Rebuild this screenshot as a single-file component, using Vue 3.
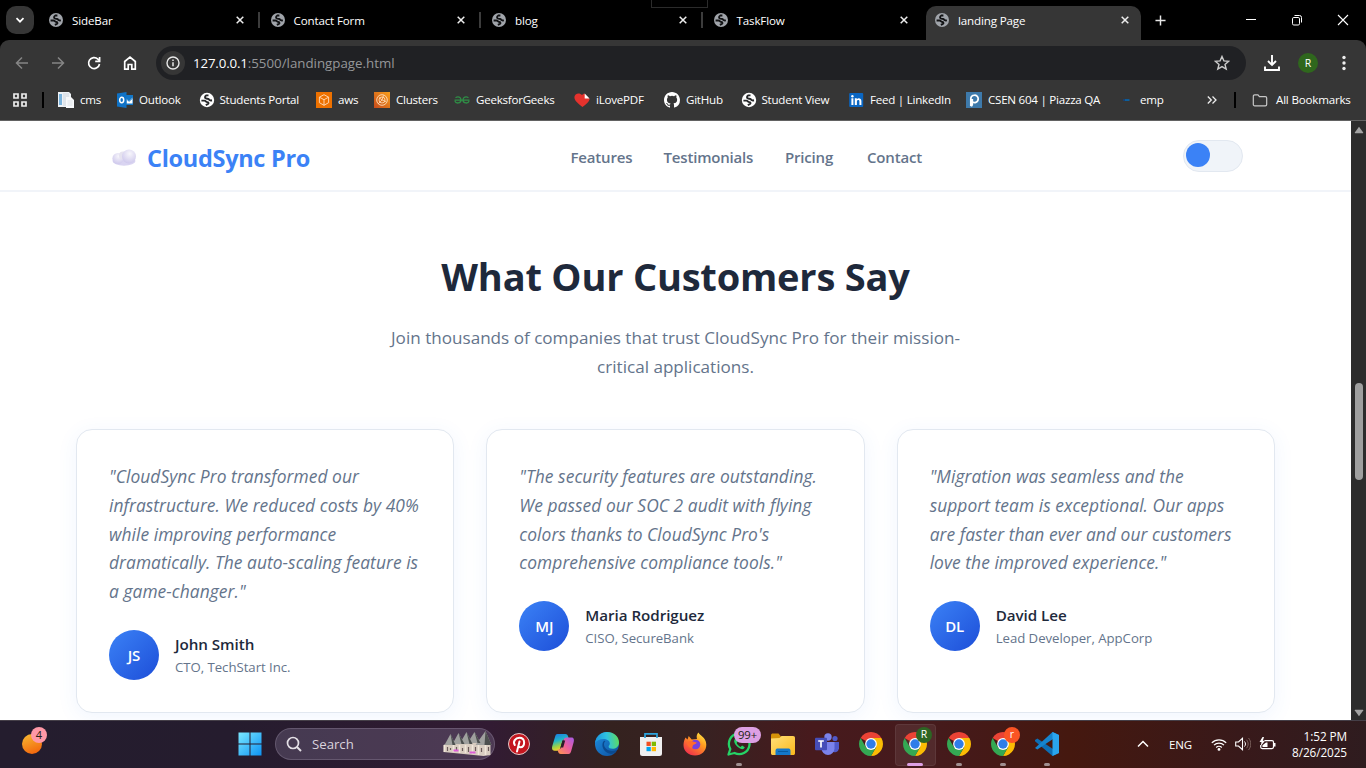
<script setup>
const tabs = [
  { title: 'SideBar' },
  { title: 'Contact Form' },
  { title: 'blog' },
  { title: 'TaskFlow', last: true },
  { title: 'landing Page', active: true },
]
const bookmarks = [
  { icon: 'cms', text: 'cms' },
  { icon: 'outlook', text: 'Outlook' },
  { icon: 'globe-white', text: 'Students Portal' },
  { icon: 'aws', text: 'aws' },
  { icon: 'clusters', text: 'Clusters' },
  { icon: 'gfg', text: 'GeeksforGeeks' },
  { icon: 'pdf', text: 'iLovePDF' },
  { icon: 'github', text: 'GitHub' },
  { icon: 'globe-white', text: 'Student View' },
  { icon: 'linkedin', text: 'Feed | LinkedIn' },
  { icon: 'piazza', text: 'CSEN 604 | Piazza QA' },
  { icon: 'emp', text: 'emp' },
]
const cards = [
  {
    lines: ['"CloudSync Pro transformed our', 'infrastructure. We reduced costs by 40%', 'while improving performance', 'dramatically. The auto-scaling feature is', 'a game-changer."'],
    initials: 'JS', name: 'John Smith', role: 'CTO, TechStart Inc.',
  },
  {
    lines: ['"The security features are outstanding.', 'We passed our SOC 2 audit with flying', "colors thanks to CloudSync Pro's", 'comprehensive compliance tools."'],
    initials: 'MJ', name: 'Maria Rodriguez', role: 'CISO, SecureBank',
  },
  {
    lines: ['"Migration was seamless and the', 'support team is exceptional. Our apps', 'are faster than ever and our customers', 'love the improved experience."'],
    initials: 'DL', name: 'David Lee', role: 'Lead Developer, AppCorp',
  },
]
const apps = [
  { icon: 'pinterest' },
  { icon: 'copilot' },
  { icon: 'edge' },
  { icon: 'store' },
  { icon: 'firefox' },
  { icon: 'whatsapp', badge: '99+', kind: 'count', running: true },
  { icon: 'explorer' },
  { icon: 'teams' },
  { icon: 'chrome' },
  { icon: 'chrome', badge: 'R', kind: 'green', active: true },
  { icon: 'chrome', running: true },
  { icon: 'chrome', badge: 'r', kind: 'orange', running: true },
  { icon: 'vscode', running: true },
]
</script>

<template>
  <div class="screen">
    <svg class="sprite" aria-hidden="true">
      <defs>
        <linearGradient id="g-cop1" x1="0" y1="0" x2="0.3" y2="1"><stop offset="0" stop-color="#1a76e6" /><stop offset=".45" stop-color="#22b5c8" /><stop offset=".75" stop-color="#9bd04a" /><stop offset="1" stop-color="#f4d12c" /></linearGradient>
        <linearGradient id="g-cop2" x1="1" y1="0" x2="0" y2="1"><stop offset="0" stop-color="#a45ae8" /><stop offset=".5" stop-color="#ee5f9c" /><stop offset="1" stop-color="#ff9b4a" /></linearGradient>
        <linearGradient id="g-edge" x1="0" y1="0.4" x2="1" y2="0.3"><stop offset="0" stop-color="#1b95e0" /><stop offset=".5" stop-color="#2fc2df" /><stop offset="1" stop-color="#5fdc5a" /></linearGradient>
        <linearGradient id="g-edge2" x1="0" y1="0" x2="1" y2="1"><stop offset="0" stop-color="#1f8fe0" /><stop offset="1" stop-color="#0c4f9e" /></linearGradient>
        <linearGradient id="g-fox" x1="0.9" y1="0" x2="0.2" y2="1"><stop offset="0" stop-color="#fff04a" /><stop offset=".4" stop-color="#ff9a1f" /><stop offset="1" stop-color="#f0294e" /></linearGradient>
        <linearGradient id="g-fold" x1="0" y1="0" x2="1" y2="1"><stop offset="0" stop-color="#ffe07a" /><stop offset="1" stop-color="#fbb81b" /></linearGradient>
        <linearGradient id="g-win" x1="0" y1="0" x2="1" y2="1"><stop offset="0" stop-color="#7be8ff" /><stop offset="1" stop-color="#0d93f3" /></linearGradient>
        <linearGradient id="g-clu" x1="1" y1="0" x2="0" y2="1"><stop offset="0" stop-color="#f9a01b" /><stop offset="1" stop-color="#c64a1c" /></linearGradient>
        <linearGradient id="g-ball" x1="0.2" y1="0" x2="0.6" y2="1"><stop offset="0" stop-color="#f7b731" /><stop offset="1" stop-color="#f2660d" /></linearGradient>
        <radialGradient id="g-cl" cx=".55" cy=".3" r=".8"><stop offset="0" stop-color="#f7f6fb" /><stop offset="1" stop-color="#c9c2ea" /></radialGradient>
      </defs>
      <symbol id="i-globe" viewBox="0 0 16 16">
        <circle cx="8" cy="8" r="8" fill="#a0a4aa" />
        <path d="M9.600 2.900H7.200C5.200 4 5.300 5.900 7.200 6.400l2.600.5c.5 1.500 1.800 1.900 3.800 1.500M1.800 8.600h3.400c1.300 0 1.500 1.700 3 1.700 1.600 0 1.900 1.400.9 2.100l-2.400 1.200" fill="none" stroke="#111214" stroke-width="2.100" />
      </symbol>
      <symbol id="i-globe-white" viewBox="0 0 16 16">
        <circle cx="8" cy="8" r="7.200" fill="#fff" />
        <path d="M9.500 3.400H7.300C5.500 4.400 5.600 6 7.300 6.500l2.300.5c.5 1.300 1.600 1.700 3.400 1.300M2.400 8.600h3.100c1.200 0 1.400 1.500 2.700 1.500 1.400 0 1.700 1.300.8 1.900l-2.200 1.100" fill="none" stroke="#27282a" stroke-width="1.900" />
      </symbol>
      <symbol id="i-cms" viewBox="0 0 16 16">
        <path d="M0 0h11l2 2v13H0Z" fill="#eef2f6" /><path d="M1 2h3v11H1Z" fill="#79b2dc" /><path d="M5 1h6V14H5Z" fill="#dfe4ea" /><path d="M8 5h5l3 3v8H8Z" fill="#f8f9fb" /><path d="M9.500 9h5M9.500 11h5M9.500 13h5" stroke="#d4dae1" stroke-width=".7" />
      </symbol>
      <symbol id="i-outlook" viewBox="0 0 16 16">
        <path d="M8 3h8v10H8Z" fill="#1277c8" /><path d="M9.500 6.500 12 9l3.500-3.500v6H9.500Z" fill="#fff" /><path d="m9.500 7 2.600 2.300L15.700 6" fill="none" stroke="#1277c8" /><path d="M0 1.500 9.500 0v16L0 14.500Z" fill="#0f72c6" /><ellipse cx="4.700" cy="8" rx="2" ry="2.700" fill="none" stroke="#fff" stroke-width="1.500" />
      </symbol>
      <symbol id="i-aws" viewBox="0 0 16 16">
        <path d="M0 0h16v16H0Z" fill="#ed7100" /><path d="m8 2.700 4.600 2.500v5.500L8 13.300l-4.600-2.600V5.200ZM3.400 5.200 8 7.700l4.600-2.500M8 7.700v5.600" fill="none" stroke="#ffe3c8" stroke-width=".85" />
      </symbol>
      <symbol id="i-clusters" viewBox="0 0 16 16">
        <path d="M0 0h16v16H0Z" fill="url(#g-clu)" /><circle cx="8" cy="8" r="5.300" fill="none" stroke="#ffe0bd" stroke-width=".9" /><circle cx="8" cy="8" r="3" fill="none" stroke="#ffe0bd" stroke-width=".8" /><path d="m4 12 4-4 1.500-4.500M5 5.500 8 8l4 1.600" fill="none" stroke="#ffe0bd" stroke-width=".8" />
      </symbol>
      <symbol id="i-gfg" viewBox="0 0 16 16">
        <path d="M1.500 5.700C4 4.200 7 5 7 8c0 3.600-5.300 4-6.100.8M.5 8.200h15M14.500 5.700C12 4.200 9 5 9 8c0 3.600 5.300 4 6.100.8" fill="none" stroke="#2f8d46" stroke-width="1.300" />
      </symbol>
      <symbol id="i-pdf" viewBox="0 0 16 16">
        <path d="M8.500 15C4 11.500.4 8.500.4 5.200.4 1 6 .3 8 3l2-1.500L15.700 7c-.4 2.800-3.600 5.500-7.200 8Z" fill="#e5322d" /><path d="M10.700 1.600 15.500 6.400h-4.800Z" fill="#fff" />
      </symbol>
      <symbol id="i-github" viewBox="0 0 16 16">
        <path fill="#fff" d="M8 0C3.580 0 0 3.580 0 8c0 3.540 2.290 6.530 5.470 7.590.4.070.55-.17.55-.38v-1.490c-2.010.37-2.530-.49-2.690-.94-.09-.23-.48-.94-.82-1.130-.28-.15-.68-.52-.01-.53.63-.01 1.080.58 1.230.82.72 1.210 1.870.87 2.330.66.07-.52.28-.87.51-1.070-1.780-.2-3.640-.89-3.640-3.950 0-.87.31-1.590.82-2.150-.08-.2-.36-1.020.08-2.120 0 0 .67-.21 2.200.82a7.500 7.500 0 0 1 4 0c1.530-1.040 2.200-.82 2.200-.82.44 1.100.16 1.920.08 2.120.51.56.82 1.270.82 2.150 0 3.070-1.870 3.750-3.650 3.950.29.25.54.73.54 1.480v2.200c0 .21.15.46.55.38A8 8 0 0 0 16 8c0-4.420-3.580-8-8-8Z" />
      </symbol>
      <symbol id="i-linkedin" viewBox="0 0 16 16">
        <rect x=".2" y="1" width="14" height="14" rx="1" fill="#0a66c2" /><path d="M2.400 6.300h2V13h-2ZM5.800 6.300h2v.9c1.200-1.700 4.600-1.300 4.600 1.800v4h-2V9.500c0-2.100-2.500-1.900-2.500 0V13H5.800Z" fill="#fff" /><circle cx="3.400" cy="4.200" r="1.200" fill="#fff" />
      </symbol>
      <symbol id="i-piazza" viewBox="0 0 16 16">
        <path d="M0 0h16v16H0Z" fill="#3e7aab" /><path d="M4.800 14V7c0-5 7.400-5 7.400-.2 0 4-4.300 4.600-6 2.500M4.800 14c1 0 1.500-.5 1.500-1.500V7" fill="none" stroke="#fff" stroke-width="1.700" />
      </symbol>
      <symbol id="i-emp" viewBox="0 0 16 16"><path d="M2 7h6v2H2Z" fill="#193f70" /><path d="M4 7.300h4.500v1.500H4Z" fill="#0b68a8" /></symbol>

      <symbol id="i-pinterest" viewBox="0 0 24 24">
        <circle cx="12" cy="12" r="10.500" fill="#c4161f" stroke="#e5c9c9" stroke-width="1" /><path d="M7.800 13C5.500 9.500 8.500 5.800 12.300 5.800c6.600 0 5.900 9.500 1.200 9.500-1.300 0-2-.8-2-.8M12.500 9.500 10 19.500" fill="none" stroke="#fff" stroke-width="2" stroke-linecap="round" />
      </symbol>
      <symbol id="i-copilot" viewBox="0 0 24 24">
        <path d="M6.500 2h7.800c1.700 0 2.500 1.200 3 3l.6 2.200h-3.500c-2 0-2.800 1-3.300 2.800L9.300 16c-.6 1.800-1.300 2.700-3 2.700H3.500C1 18.700.7 16.500 1.300 14L4 5c.5-1.900 1-3 2.500-3Z" fill="url(#g-cop1)" />
        <path d="M17.500 22H9.800c-1.600 0-2.300-1-2.800-2.800l-.3-1.700c2 0 3-.7 3.600-2.600L12.700 8c.6-2 1.300-2.600 3-2.600h4.700c2.400 0 2.900 2.100 2.300 4.600L20.200 19c-.6 2-1.200 3-2.700 3Z" fill="url(#g-cop2)" /><path d="M11.500 8.500h2.700l-2 7H9.500Z" fill="#2d1c29" />
      </symbol>
      <symbol id="i-edge" viewBox="0 0 24 24">
        <circle cx="12" cy="12" r="12" fill="url(#g-edge2)" /><path d="M0 11C1 4.500 6 0 12 0c6.900 0 12 4.700 12 10.400 0 4.200-3.200 6.400-6.500 6.400-2.400 0-4-1-3.900-2.300.1-.9 1.200-1.500 1.200-3C14.800 8.700 11.800 7 8.500 7 4.500 7 1.300 8.700 0 11Z" fill="url(#g-edge)" /><path d="M9 8.800c-3.500 3.400-1.300 12.200 7.300 13.200 2.700-.3 4.800-2 5.900-4.300-5.400 3-12.800.2-13.200-4.900-.1-1.600.5-3 1.500-3.800Z" fill="#0b4a8f" /><path d="M22.200 17.700c.9.100 1.100.5.300 1.600l2-1v6h-8.500c2.800-.5 5.200-3 6.200-6.600Z" fill="#35201f" />
      </symbol>
      <symbol id="i-store" viewBox="0 0 24 24">
        <path d="M1 5h22v16.500A2.500 2.500 0 0 1 20.500 24h-17A2.500 2.500 0 0 1 1 21.500Z" fill="#f0f0f0" /><path d="M6 6V1.800h12V6" fill="none" stroke="#2ca5df" stroke-width="1.700" /><path d="M7.500 9.700h4.300V14H7.500Z" fill="#f25022" /><path d="M12.700 9.700H17V14h-4.300Z" fill="#7fba00" /><path d="M7.500 14.900h4.300v4.300H7.500Z" fill="#00a4ef" /><path d="M12.700 14.900H17v4.300h-4.300Z" fill="#ffb900" />
      </symbol>
      <symbol id="i-firefox" viewBox="0 0 24 24">
        <path d="M2.400 5.500 4.500 7.600 5.700 4l3 3.600L14 7c-1-3 .3-5.500 1.500-6.500.7 3 7.500 4 7.800 12C23.500 19 18.500 23.500 12 23.500S.5 19 .5 13c0-2.800.9-5.400 1.900-7.500Z" fill="url(#g-fox)" /><circle cx="12.500" cy="12.500" r="4.800" fill="#7541df" /><path d="M4 10.500c2-2 5-2 6.700-.7l3 .6c-.4 1.500-2.500 1.500-3.500 2.600-.9 1-.2 2.700-1.700 3.400-2.500-1-4.800-3.600-4.500-5.900Z" fill="#ff6b2e" />
      </symbol>
      <symbol id="i-whatsapp" viewBox="0 0 24 24">
        <path d="M1.500 22.500 3.300 17A10.300 10.300 0 1 1 7.500 21Z" fill="none" stroke="#25d366" stroke-width="2.300" stroke-linejoin="round" /><path d="M8.500 6.500c-3.200 2.500.2 6.800 2.300 8.600 2.500 2.100 5.900 3.300 7 .2l-2.700-1.700-1.500 1.300c-1.800-.8-3.200-2.200-4-3.900l1.200-1.500Z" fill="#25d366" />
      </symbol>
      <symbol id="i-explorer" viewBox="0 0 24 24">
        <path d="M0 3.500C0 2 .7 1.500 2 1.500h5.500l2.500 3v3H0Z" fill="#d69208" /><path d="M0 6.500 8.500 6 10.500 4H22c1.500 0 2 .7 2 2v15c0 1.500-.5 2-2 2H2c-1.500 0-2-.5-2-2Z" fill="url(#g-fold)" /><path d="M4.500 23v-4c0-2 1-2.500 2.500-2.500h10c1.500 0 2.500.5 2.500 2.500v4Z" fill="#1477c9" /><path d="M7 19.500h10" stroke="#075aa0" />
      </symbol>
      <symbol id="i-teams" viewBox="0 0 24 24">
        <circle cx="13" cy="5" r="3.700" fill="#7b83eb" /><circle cx="20" cy="6.500" r="2.600" fill="#5059c9" /><path d="M15 10h9v6.500a4.500 4.500 0 0 1-7 3Z" fill="#5059c9" /><path d="M6.500 10h13v6.500a6.500 6.500 0 0 1-13 0Z" fill="#7b83eb" /><rect x="0" y="5.800" width="12" height="12.500" rx="1" fill="#464eb8" /><path d="M3.200 9h5.600M6 9v6.500" stroke="#fff" stroke-width="1.700" />
      </symbol>
      <symbol id="i-chrome" viewBox="0 0 24 24">
        <path d="M12 12 1.610 6A12 12 0 0 1 22.390 6Z" fill="#ea4335" /><path d="M12 6h10.390A12 12 0 0 1 12 24l5.200-9Z" fill="#fbbc04" /><path d="M1.610 6 6.800 15 12 18l5.200-3L12 24A12 12 0 0 1 1.610 6Z" fill="#34a853" /><circle cx="12" cy="12" r="5.900" fill="#fff" /><circle cx="12" cy="12" r="4.700" fill="#2f7de9" />
      </symbol>
      <symbol id="i-vscode" viewBox="0 0 24 24">
        <path d="m0 7.900 2.300-1.500L24 21l-6.500 3L0 9.300Z" fill="#0d6eb5" /><path d="M0 16.100 17.500 0 24 3 2.300 17.600 0 16.100Z" fill="#1684ce" /><path d="M17.500 0 24 3v18l-6.500 3Z" fill="#2aa5ee" />
      </symbol>
    </svg>

    <header class="tabstrip">
      <div class="strip-left"><span class="tab-search"><svg viewBox="0 0 10 10"><path d="m1.500 3.200 3.500 3.500 3.500-3.500" fill="none" stroke="#fff" stroke-width="1.700" /></svg></span></div>
      <div v-for="t in tabs" :key="t.title" class="tab" :class="{ active: t.active, last: t.last }">
        <svg class="favicon"><use href="#i-globe" /></svg>
        <span class="tab-title">{{ t.title }}</span>
        <svg class="close" viewBox="0 0 8 8"><path d="m.7.7 6.600 6.600M7.300.7.7 7.300" stroke="#eee" stroke-width="1.500" /></svg>
      </div>
      <svg class="plus" viewBox="0 0 12 12"><path d="M6 .5v11M.5 6h11" stroke="#e6e6e6" stroke-width="1.600" /></svg>
      <div class="win-buttons">
        <svg viewBox="0 0 12 12"><path d="M1 5.500h10" stroke="#fff" /></svg>
        <svg viewBox="0 0 12 12"><rect x="1.500" y="3.500" width="7" height="7.500" rx="1.300" fill="none" stroke="#fff" /><path d="M3.500 1.500h5a2 2 0 0 1 2 2v5" fill="none" stroke="#fff" /></svg>
        <svg viewBox="0 0 12 12"><path d="m1 1 10 10M11 1 1 11" stroke="#fff" stroke-width="1.100" /></svg>
      </div>
      <span class="snap-hint"></span>
    </header>

    <div class="chrome-body">
      <div class="toolbar">
        <svg class="tool dim" viewBox="0 0 16 16"><path d="M14 8H3M8 2.500 2.500 8 8 13.500" /></svg>
        <svg class="tool dim" viewBox="0 0 16 16"><path d="M2 8h11M8 2.500 13.500 8 8 13.500" /></svg>
        <svg class="tool" viewBox="0 0 16 16"><path d="M13.500 9A5.500 5.500 0 1 1 11.900 4.100L13.500 5.700" /><path d="M13.600 2v4.400H9.200" /></svg>
        <svg class="tool" viewBox="0 0 16 16"><path d="M2.700 14.200V6.500L8 2l5.300 4.500v7.700H9.800V9.500H6.200v4.700Z" /></svg>
        <div class="omnibox">
          <span class="info"><svg viewBox="0 0 14 14"><circle cx="7" cy="7" r="6" fill="none" stroke="#e8e8e8" stroke-width="1.400" /><path d="M7 6.200v4M7 3.600v1.500" stroke="#e8e8e8" stroke-width="1.500" /></svg></span>
          <span class="url"><b>127.0.0.1</b>:5500/landingpage.html</span>
          <svg class="star" viewBox="0 0 16 16"><path d="m8 1.500 1.900 4.400 4.800.4-3.700 3.100 1.200 4.700L8 11.600l-4.200 2.500L5 9.400 1.300 6.300l4.800-.4Z" fill="none" stroke="#ccc" stroke-width="1.400" /></svg>
        </div>
        <svg class="download" viewBox="0 0 16 16"><path d="M8 0v9.500M4 6l4 4 4-4M1 11.500V15h14v-3.500" fill="none" stroke="#fff" stroke-width="1.900" /></svg>
        <span class="profile">R</span>
        <svg class="dots" viewBox="0 0 4 16"><circle cx="2" cy="2.500" r="1.700" /><circle cx="2" cy="8" r="1.700" /><circle cx="2" cy="13.500" r="1.700" /></svg>
      </div>
      <div class="bookmarks">
        <svg class="grid-icon" viewBox="0 0 14 14"><path d="M1 1h4v4H1ZM9 1h4v4H9ZM1 9h4v4H1ZM9 9h4v4H9Z" fill="none" stroke="#ececec" stroke-width="1.700" /></svg>
        <i class="divider"></i>
        <div class="bm-list">
          <span v-for="(b, i) in bookmarks" :key="i" class="bm"><svg><use :href="'#i-' + b.icon" /></svg><span>{{ b.text }}</span></span>
        </div>
        <svg class="more" viewBox="0 0 10 10"><path d="m.8 1.500 3.500 3.500L.8 8.500M5.500 1.500 9 5 5.500 8.500" fill="none" stroke="#eee" stroke-width="1.300" /></svg>
        <i class="divider"></i>
        <svg class="folder" viewBox="0 0 16 14"><path d="M.8 2.500c0-1 .5-1.500 1.500-1.500h3.500l1.600 1.800h6.300c1 0 1.500.5 1.500 1.500v6.900c0 1-.5 1.500-1.500 1.500H2.300c-1 0-1.500-.5-1.500-1.500Z" fill="none" stroke="#c7c7c7" stroke-width="1.300" /></svg>
        <span class="all-bm">All Bookmarks</span>
      </div>
    </div>

    <div class="viewport">
      <main class="page">
        <nav class="nav">
          <div class="logo">
            <svg viewBox="0 0 24 17"><ellipse cx="12" cy="12" rx="11.500" ry="4.700" fill="#d9d4f1" /><circle cx="6" cy="9.500" r="5.600" fill="url(#g-cl)" /><circle cx="11" cy="6.500" r="4" fill="#e6e3ef" /><circle cx="17" cy="7.500" r="7" fill="url(#g-cl)" /></svg>
            <span>CloudSync Pro</span>
          </div>
          <div class="links"><a>Features</a><a>Testimonials</a><a>Pricing</a><a>Contact</a></div>
          <div class="toggle"><i></i></div>
        </nav>
        <section class="testimonials">
          <h2>What Our Customers Say</h2>
          <p class="lead">Join thousands of companies that trust CloudSync Pro for their mission-<br />critical applications.</p>
          <div class="cards">
            <article v-for="c in cards" :key="c.name" class="card">
              <p class="quote"><span v-for="l in c.lines" :key="l">{{ l }}</span></p>
              <div class="author">
                <span class="avatar">{{ c.initials }}</span>
                <div><h4>{{ c.name }}</h4><p>{{ c.role }}</p></div>
              </div>
            </article>
          </div>
        </section>
      </main>
      <aside class="scrollbar">
        <svg viewBox="0 0 10 8"><path d="M5 .8 9.200 6.500Q9.500 7.300 8.700 7.300H1.300Q.5 7.300.8 6.500Z" fill="#a3a3a3" /></svg>
        <span class="thumb"></span>
        <svg viewBox="0 0 10 8"><path d="M5 7.200.8 1.500Q.5.700 1.300.7H8.700Q9.500.7 9.200 1.500Z" fill="#a3a3a3" /></svg>
      </aside>
    </div>

    <footer class="taskbar">
      <div class="widget"><svg viewBox="0 0 20 20"><circle cx="10" cy="10" r="10" fill="url(#g-ball)" /></svg><span>4</span></div>
      <svg class="start" viewBox="0 0 24 24"><path d="M.5.500h11v11H.5ZM12.500.500h11v11h-11ZM.5 12.500h11v11H.5ZM12.500 12.500h11v11h-11Z" fill="url(#g-win)" /></svg>
      <div class="search">
        <svg class="lens" viewBox="0 0 16 16"><circle cx="7" cy="7" r="5.500" fill="none" stroke="#e4e0e6" stroke-width="1.700" /><path d="m11 11 4 4" stroke="#e4e0e6" stroke-width="1.900" /></svg>
        <span>Search</span>
        <svg class="castle" viewBox="0 0 48 26">
          <path d="M0 14 5 12h38l4 2v10l-7 1-40-4Z" fill="#d8ccc0" />
          <path d="M1 14 7 3l5 11ZM9 13 15 2l6 11ZM16 13 23 1l6 12ZM24 12 31 1l6 11ZM32 14 42 0l6 14Z" fill="#9fa09e" />
          <path d="M7 3 9 14h3ZM15 2l3 11h3ZM23 1l3 12h3ZM31 1l3 11h3ZM42 0l-1 14h7Z" fill="#4d504f" />
          <path d="M4 16v4M7 17v2M13 16v4M19 17v3M25 16v5M32 16v4M38 17v4M45 16v4" stroke="#6b5a5a" stroke-width="1.200" />
          <path d="M1 21V14M10 21V14M16 22V14M22 22V14M29 23V14M35 24V14M42 24V14" stroke="#f1e7da" stroke-width="1.500" />
          <path d="M10 19.500h5M26 21.500h6" stroke="#db5dd8" stroke-width="2" />
        </svg>
      </div>
      <div class="apps">
        <span v-for="(a, i) in apps" :key="i" class="app" :class="{ active: a.active, running: a.running }">
          <svg><use :href="'#i-' + a.icon" /></svg>
          <em v-if="a.badge" :class="a.kind">{{ a.badge }}</em>
        </span>
      </div>
      <div class="tray">
        <svg class="chev" viewBox="0 0 12 12"><path d="m1 8.500 5-5 5 5" fill="none" stroke="#fff" stroke-width="1.500" /></svg>
        <span class="lang">ENG</span>
        <svg class="wifi" viewBox="0 0 16 13"><path d="M.8 4.800a10.200 10.200 0 0 1 14.400 0M3 7.200a7 7 0 0 1 10 0M5.200 9.500a4 4 0 0 1 5.600 0" fill="none" stroke="#fff" stroke-width="1.200" /><circle cx="8" cy="11.400" r="1.400" fill="#fff" /></svg>
        <svg class="sound" viewBox="0 0 16 14"><path d="M.7 5h2.800L7.500 1.300v11.400L3.500 9H.7Z" fill="none" stroke="#fff" stroke-width="1.100" /><path d="M9.500 4.500c1.300 1.500 1.300 3.500 0 5" fill="none" stroke="#fff" /><path d="M11.500 2.800c2.200 2.500 2.200 5.900 0 8.400M13.500 1c3 3.500 3 8.500 0 12" fill="none" stroke="#7c625e" /></svg>
        <svg class="battery" viewBox="0 0 17 14"><path d="M5.500 3.600H13a1.500 1.500 0 0 1 1.500 1.500v5A1.500 1.500 0 0 1 13 11.600H3.200a1.500 1.500 0 0 1-1.500-1.500V8" fill="none" stroke="#fff" stroke-width="1.200" /><path d="M15 6h1.500v3.500H15ZM3.500 10V8.300L7 5.500h1.500V10Z" fill="#fff" /><path d="m3.500 0-3 5h2l-.7 4L6 3.700H3.800L5 0Z" fill="#fff" /></svg>
        <div class="clock"><span>1:52 PM</span><span>8/26/2025</span></div>
      </div>
    </footer>
  </div>
</template>

<style>
body { margin: 0; overflow: hidden; }
</style>

<style scoped>
.screen, .screen * { box-sizing: border-box; }
.screen { width: 1366px; height: 768px; overflow: hidden; display: flex; flex-direction: column; font-family: "Open Sans", "Noto Sans", sans-serif; background: #000; }
.sprite { position: absolute; width: 0; height: 0; }
svg { display: block; flex: none; }
h2, h4, p { margin: 0; }

.tabstrip { height: 40px; display: flex; align-items: center; position: relative; color: #fff; flex: none; }
.strip-left { width: 38px; padding-left: 6px; }
.tab-search { width: 28px; height: 28px; border-radius: 10px; background: #363636; display: grid; place-items: center; }
.tab-search svg { width: 10px; height: 10px; }
.tab { width: 221.5px; height: 34px; align-self: flex-end; padding: 0 16px 6px 11px; display: flex; align-items: center; position: relative; flex: none; }
.tab::after { content: ""; position: absolute; right: 0; top: 6px; width: 2px; height: 16px; background: #3c3c3c; }
.tab.active::after, .tab.last::after { display: none; }
.favicon { width: 14px; height: 14px; }
.tab-title { margin-left: 9px; font-size: 11.600px; letter-spacing: -0.150px; white-space: nowrap; flex: 1; }
.close { width: 8px; height: 8px; }
.tab.active { width: 217px; padding-right: 12px; }
.tab.active::before { content: ""; position: absolute; left: 2px; right: 0; top: 0; bottom: 0; background: #363636; border-radius: 10px 10px 0 0; }
.tab.active > * { position: relative; }
.plus { width: 11px; height: 11px; margin-left: 14px; }
.win-buttons { display: flex; gap: 34px; margin-left: auto; margin-right: 17px; }
.win-buttons svg { width: 12px; height: 12px; }
.snap-hint { position: absolute; left: 651px; top: -1px; width: 57px; height: 9px; border: 1px solid #2b2b2b; }

.chrome-body { height: 81px; background: #363636; border-radius: 9px 9px 0 0; border-bottom: 1px solid #626262; flex: none; }
.toolbar { height: 46px; display: flex; align-items: center; padding-left: 14px; }
.tool { width: 16px; height: 16px; margin-right: 20px; fill: none; stroke: #fff; stroke-width: 1.700; }
.tool.dim { stroke: #858585; stroke-width: 1.500; }
.omnibox { width: 1090px; height: 34px; margin-left: -2px; border-radius: 17px; background: #202124; display: flex; align-items: center; padding: 0 16px 0 5px; }
.info { width: 24px; height: 24px; border-radius: 50%; background: #363636; display: grid; place-items: center; }
.info svg { width: 14px; height: 14px; }
.url { margin-left: 8px; flex: 1; font-size: 13.300px; color: #959799; }
.url b { font-weight: 400; color: #fff; letter-spacing: -0.150px; }
.star { width: 16px; height: 16px; }
.download { width: 16px; height: 16px; margin-left: 18px; }
.profile { width: 20px; height: 20px; border-radius: 50%; background: #2f671d; margin-left: 18px; color: #fff; font-size: 10.500px; text-align: center; line-height: 20px; }
.dots { width: 4px; height: 16px; margin-left: 24px; fill: #eee; }
.bookmarks { height: 28px; display: flex; align-items: center; padding-left: 13px; color: #fff; font-size: 11.600px; white-space: nowrap; }
.grid-icon { width: 14px; height: 14px; }
.divider { width: 2px; height: 16px; background: #000; flex: none; margin-left: 15px; }
.bm-list { width: 1149px; margin-left: 14px; display: grid; grid-template-columns: 59px 82px 117px 58px 80px 120px 90px 77px 108px 117px 155px 1fr; flex: none; }
.bm { display: flex; align-items: center; gap: 6px; letter-spacing: -0.250px; }
.bm > span { margin-top: -2px; }
.bm:nth-child(3), .bm:nth-child(9) { gap: 5px; margin-left: -0.500px; }
.bm:nth-child(10) { gap: 5px; }
.bm svg { width: 16px; height: 16px; }
.bm:last-child { gap: 3px; }
.more { width: 10px; height: 10px; }
.more + .divider { margin-left: 17px; }
.folder { width: 16px; height: 13px; margin-left: 16px; }
.all-bm { margin-left: 8px; margin-top: -2px; letter-spacing: -0.200px; }

.viewport { height: 599px; display: flex; flex: none; }
.page { width: 1351px; background: #fff; overflow: hidden; }
.nav { height: 71px; border-bottom: 2px solid #f1f4f9; padding: 1px 108px 0 112px; display: grid; grid-template-columns: 458.500px 1fr 60px; align-items: center; }
.logo { display: flex; align-items: center; gap: 11px; color: #3b82f6; font-weight: 700; font-size: 23.500px; letter-spacing: -0.300px; white-space: nowrap; padding-top: 3px; }
.logo svg { width: 24px; height: 17px; }
.links { display: grid; grid-template-columns: 93px 121.500px 82px 70px; color: #64748b; font-size: 15px; font-weight: 600; padding-top: 1px; letter-spacing: -0.180px; }
.toggle { width: 60px; height: 32px; border: 1px solid #e2e8f0; border-radius: 16px; background: #f0f4f9; padding: 2px; }
.toggle i { display: block; width: 24px; height: 24px; border-radius: 50%; background: #3b82f6; }
.testimonials { padding: 52px 76px 0; }
h2 { font-size: 38px; line-height: 64px; font-weight: 700; color: #1e293b; text-align: center; letter-spacing: -0.200px; }
.lead { margin-top: 16px; text-align: center; color: #64748b; font-size: 17.100px; line-height: 28.800px; }
.cards { margin-top: 47.400px; display: grid; grid-template-columns: repeat(3, 1fr); gap: 32px; }
.card { height: 284px; border: 1px solid #e2e8f0; border-radius: 16px; padding: 32px; background: #fff; box-shadow: 0 4px 20px rgba(59, 130, 246, .08); }
.quote { font-style: italic; font-size: 17.400px; line-height: 28.800px; color: #64748b; white-space: nowrap; letter-spacing: 0.050px; }
.quote span { display: block; }
.author { margin-top: 24px; display: flex; align-items: center; gap: 16px; }
.avatar { width: 50px; height: 50px; border-radius: 50%; background: linear-gradient(135deg, #3b82f6, #1d4ed8); color: #fff; font-weight: 600; font-size: 15px; letter-spacing: -0.100px; display: grid; place-items: center; }
.author h4 { font-size: 15.200px; line-height: 24px; font-weight: 600; color: #1e293b; letter-spacing: -0.050px; }
.author p { font-size: 13.200px; line-height: 22px; color: #64748b; letter-spacing: -0.030px; }
.scrollbar { width: 15px; background: #2c2c2c; display: flex; flex-direction: column; align-items: center; padding: 5px 0 3px; }
.scrollbar svg { width: 10px; height: 8px; }
.thumb { width: 8px; height: 97px; border-radius: 4px; background: #9f9f9f; margin-top: 249px; margin-bottom: auto; }

.taskbar { height: 48px; border-top: 1px solid #453f48; padding-bottom: 1px; background: linear-gradient(90deg, #241d2e 0, #251c2e 230px, #321b33 490px, #34221f 610px, #372222 700px, #471a1d 810px, #451a1c 930px, #45180f 1070px, #38191a 1240px, #2f1c1f 1366px); display: flex; align-items: center; flex: none; color: #fff; }
.widget { width: 238px; padding-left: 22px; position: relative; }
.widget svg { width: 20px; height: 20px; }
.widget span { position: absolute; left: 31px; top: -7px; width: 16px; height: 16px; border-radius: 50%; background: #ff98a6; color: #221; font-size: 11px; line-height: 16px; text-align: center; }
.start { width: 24px; height: 24px; }
.search { width: 220px; height: 32px; margin-left: 13px; border-radius: 16px; background: rgba(150, 140, 175, .27); border: 1px solid rgba(170, 155, 180, .3); display: flex; align-items: center; padding: 0 2px 0 10px; }
.lens { width: 16px; height: 16px; }
.search span { margin-left: 10px; flex: 1; font-size: 13.200px; color: #dad3dd; }
.castle { width: 49px; height: 26px; }
.apps { display: flex; margin-left: 2px; }
.app { width: 44px; height: 46px; display: grid; place-items: center; position: relative; }
.app svg { width: 24px; height: 24px; position: relative; }
.app.active::before { content: ""; position: absolute; left: 2px; top: 3px; width: 39px; height: 40px; border-radius: 4px; background: rgba(255, 255, 255, .07); border: 1px solid rgba(255, 255, 255, .07); }
.app.active::after, .app.running::after { content: ""; position: absolute; bottom: 1px; left: 19px; width: 6px; height: 3px; border-radius: 2px; background: #a08f90; }
.app.active::after { left: 14px; width: 16px; background: #dda0e4; }
.app em { position: absolute; font-style: normal; font-size: 10.500px; text-align: center; line-height: 15px; width: 16px; height: 16px; border-radius: 8px; left: 23px; top: 6px; color: #fff; }
.app em.count { width: 27px; left: 17px; background: #dda0e4; color: #221; font-size: 11.300px; letter-spacing: -0.100px; }
.app em.green { background: #2d6523; }
.app em.orange { background: #fa5424; }
.tray { margin-left: auto; display: flex; align-items: center; padding-right: 19px; }
.chev { width: 12px; height: 12px; }
.lang { font-size: 11.500px; margin-left: 20px; letter-spacing: -0.100px; }
.wifi { width: 16px; height: 13px; margin-left: 19px; }
.sound { width: 16px; height: 14px; margin-left: 8px; }
.battery { width: 17px; height: 14px; margin-left: 8px; }
.clock { display: flex; flex-direction: column; align-items: flex-end; width: 71px; font-size: 11.800px; line-height: 16px; letter-spacing: -0.100px; }
</style>
